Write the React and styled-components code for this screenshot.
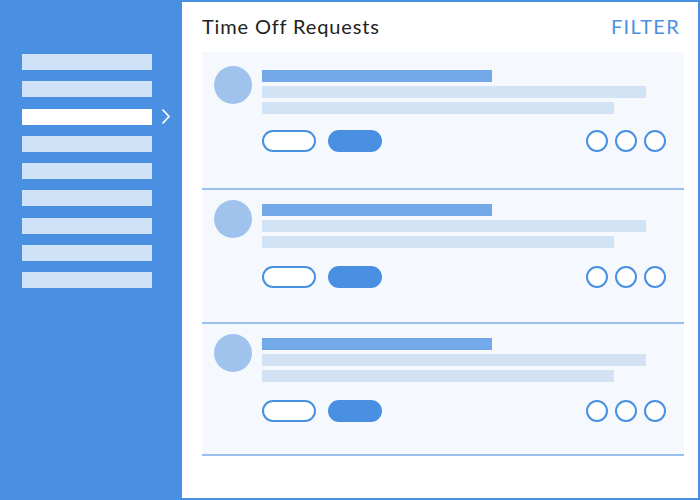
import React from "react";
import styled, { createGlobalStyle } from "styled-components";

const GlobalStyle = createGlobalStyle`
  html, body {
    margin: 0;
    padding: 0;
    background: #4a90e2;
    font-family: Lato, "Open Sans", sans-serif;
  }
`;

const navItems = [false, false, true, false, false, false, false, false, false];

const requests = [
  { id: 1, top: 14, bottom: 36, gap: 16 },
  { id: 2, top: 10, bottom: 34, gap: 18 },
  { id: 3, top: 10, bottom: 32, gap: 18 },
];

export default function App() {
  return (
    <Root>
      <GlobalStyle />
      <Sidebar>
        {navItems.map((active, i) => (
          <NavItem key={i}>
            <NavBar $active={active} />
            {active && (
              <svg width="10" height="17" viewBox="0 0 10 17">
                <path d="M1.5 1.5 L8 8.5 L1.5 15.5" fill="none" stroke="#fff" strokeWidth="1.8" />
              </svg>
            )}
          </NavItem>
        ))}
      </Sidebar>
      <Main>
        <Header>
          <Title>Time Off Requests</Title>
          <Filter>FILTER</Filter>
        </Header>
        <List>
          {requests.map((r) => (
            <Card key={r.id} $top={r.top} $bottom={r.bottom}>
              <Avatar />
              <Body $gap={r.gap}>
                <Lines>
                  <Line $w={230} $dark />
                  <Line $w={384} />
                  <Line $w={352} />
                </Lines>
                <Actions>
                  <Pills>
                    <Pill />
                    <Pill $filled />
                  </Pills>
                  <Dots>
                    <Dot />
                    <Dot />
                    <Dot />
                  </Dots>
                </Actions>
              </Body>
            </Card>
          ))}
        </List>
      </Main>
    </Root>
  );
}

const Root = styled.div`
  width: 700px;
  height: 500px;
  display: flex;
  background: #4a90e2;
  overflow: hidden;
`;

const Sidebar = styled.nav`
  width: 182px;
  flex-shrink: 0;
  padding: 54px 0 0 22px;
  box-sizing: border-box;
  display: flex;
  flex-direction: column;
  gap: 11.25px;
`;

const NavItem = styled.div`
  display: flex;
  align-items: center;
  gap: 9px;
  height: 16px;
`;

const NavBar = styled.div`
  width: 130px;
  height: 16px;
  background: ${(p) => (p.$active ? "#ffffff" : "#d0e2f7")};
`;

const Main = styled.main`
  flex: 1;
  margin: 2px 2px 2px 0;
  background: #fff;
  padding: 0 14px 0 20px;
  box-sizing: border-box;
`;

const Header = styled.header`
  height: 50px;
  display: flex;
  justify-content: space-between;
  align-items: flex-start;
  padding: 12px 5px 0 0;
  box-sizing: border-box;
`;

const Title = styled.h1`
  margin: 0;
  font-size: 20px;
  font-weight: 400;
  line-height: 24px;
  color: #222;
  letter-spacing: 0.85px;
`;

const Filter = styled.span`
  font-size: 20px;
  line-height: 24px;
  color: #4a90e2;
  letter-spacing: 1.3px;
  margin-right: -1px;
`;

const List = styled.div`
  display: flex;
  flex-direction: column;
`;

const Card = styled.section`
  display: flex;
  gap: 10px;
  background: #f5f9fe;
  border-bottom: 2px solid #9ac0ee;
  padding: ${(p) => p.$top}px 18px ${(p) => p.$bottom}px 12px;
`;

const Avatar = styled.div`
  width: 38px;
  height: 38px;
  border-radius: 50%;
  background: #a0c3ee;
  flex-shrink: 0;
`;

const Body = styled.div`
  flex: 1;
  padding-top: 4px;
  display: flex;
  flex-direction: column;
  gap: ${(p) => p.$gap}px;
`;

const Lines = styled.div`
  display: flex;
  flex-direction: column;
  gap: 4px;
`;

const Line = styled.div`
  width: ${(p) => p.$w}px;
  height: 12px;
  background: ${(p) => (p.$dark ? "#73a9e8" : "#d3e3f6")};
`;

const Actions = styled.div`
  display: flex;
  justify-content: space-between;
  align-items: center;
`;

const Pills = styled.div`
  display: flex;
  gap: 12px;
`;

const Pill = styled.div`
  width: 54px;
  height: 22px;
  box-sizing: border-box;
  border-radius: 11px;
  border: 2px solid #4a90e2;
  background: ${(p) => (p.$filled ? "#4a90e2" : "#ffffff")};
`;

const Dots = styled.div`
  display: flex;
  gap: 7px;
`;

const Dot = styled.div`
  width: 22px;
  height: 22px;
  box-sizing: border-box;
  border-radius: 50%;
  border: 2px solid #4a90e2;
  background: #fff;
`;
